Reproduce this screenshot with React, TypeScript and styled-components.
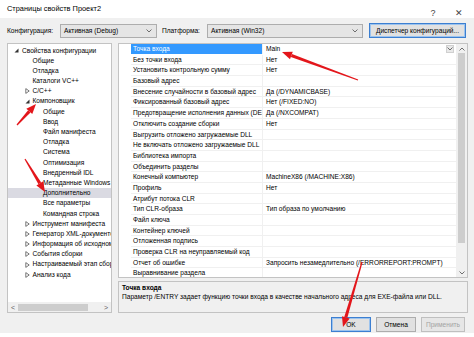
import React from 'react';
import styled, { createGlobalStyle } from 'styled-components';

const GlobalStyle = createGlobalStyle`
  html, body {
    margin: 0;
    padding: 0;
    background: #ffffff;
  }
  body {
    font-family: "Liberation Sans", Arial, sans-serif;
    font-size: 6.6px;
    color: #000;
  }
`;

type TreeItem = { level: number; text: string; exp?: 'open' | 'closed'; selected?: boolean };

const treeItems: TreeItem[] = [
  { level: 0, text: 'Свойства конфигурации', exp: 'open' },
  { level: 1, text: 'Общие' },
  { level: 1, text: 'Отладка' },
  { level: 1, text: 'Каталоги VC++' },
  { level: 1, text: 'C/C++', exp: 'closed' },
  { level: 1, text: 'Компоновщик', exp: 'open' },
  { level: 2, text: 'Общие' },
  { level: 2, text: 'Ввод' },
  { level: 2, text: 'Файл манифеста' },
  { level: 2, text: 'Отладка' },
  { level: 2, text: 'Система' },
  { level: 2, text: 'Оптимизация' },
  { level: 2, text: 'Внедренный IDL' },
  { level: 2, text: 'Метаданные Windows' },
  { level: 2, text: 'Дополнительно', selected: true },
  { level: 2, text: 'Все параметры' },
  { level: 2, text: 'Командная строка' },
  { level: 1, text: 'Инструмент манифеста', exp: 'closed' },
  { level: 1, text: 'Генератор XML-документов', exp: 'closed' },
  { level: 1, text: 'Информация об исходном коде', exp: 'closed' },
  { level: 1, text: 'События сборки', exp: 'closed' },
  { level: 1, text: 'Настраиваемый этап сборки', exp: 'closed' },
  { level: 1, text: 'Анализ кода', exp: 'closed' },
];

const props: [string, string][] = [
  ['Точка входа', 'Main'],
  ['Без точки входа', 'Нет'],
  ['Установить контрольную сумму', 'Нет'],
  ['Базовый адрес', ''],
  ['Внесение случайности в базовый адрес', 'Да (/DYNAMICBASE)'],
  ['Фиксированный базовый адрес', 'Нет (/FIXED:NO)'],
  ['Предотвращение исполнения данных (DEP)', 'Да (/NXCOMPAT)'],
  ['Отключить создание сборки', 'Нет'],
  ['Выгрузить отложено загружаемые DLL', ''],
  ['Не включать отложено загружаемые DLL', ''],
  ['Библиотека импорта', ''],
  ['Объединить разделы', ''],
  ['Конечный компьютер', 'MachineX86 (/MACHINE:X86)'],
  ['Профиль', 'Нет'],
  ['Атрибут потока CLR', ''],
  ['Тип CLR-образа', 'Тип образа по умолчанию'],
  ['Файл ключа', ''],
  ['Контейнер ключей', ''],
  ['Отложенная подпись', ''],
  ['Проверка CLR на неуправляемый код', ''],
  ['Отчет об ошибке', 'Запросить незамедлительно (/ERRORREPORT:PROMPT)'],
  ['Выравнивание раздела', ''],
];

const Stage = styled.div`
  position: relative;
  width: 474px;
  height: 337px;
  overflow: hidden;
`;

const Window = styled.div`
  width: 474px;
  height: 333px;
  background: #f0f0f0;
  display: flex;
  flex-direction: column;
`;

const TitleBar = styled.div`
  height: 18px;
  background: #ffffff;
  display: flex;
  align-items: center;
  padding: 0 2px 0 7px;
  font-size: 7.4px;
`;

const Title = styled.div`
  flex: 1;
  margin-top: -2px;
`;

const TitleBtn = styled.div`
  width: 26px;
  text-align: center;
  font-size: 9px;
  color: #444;
  margin-top: 7px;
`;

const ConfigRow = styled.div`
  height: 25px;
  display: flex;
  align-items: center;
  padding: 0 7px;
  gap: 5px;
`;

const Label = styled.span<{ $w: number }>`
  width: ${(p) => p.$w}px;
  white-space: nowrap;
`;

const Combo = styled.div<{ $w: number }>`
  width: ${(p) => p.$w}px;
  height: 14px;
  box-sizing: border-box;
  border: 1px solid #adadad;
  background: #e5e5e5;
  display: flex;
  align-items: center;
  padding: 0 4px 0 3px;
  justify-content: space-between;
`;

const Button = styled.div<{ $w: number; $primary?: boolean; $disabled?: boolean }>`
  width: ${(p) => p.$w}px;
  height: 15px;
  box-sizing: border-box;
  border: 1px solid ${(p) => (p.$primary ? '#3c7fd1' : p.$disabled ? '#bfbfbf' : '#adadad')};
  box-shadow: ${(p) => (p.$primary ? 'inset 0 0 0 1px #9cc3ee' : 'none')};
  background: ${(p) => (p.$disabled ? '#e6e6e6' : '#e1e1e1')};
  color: ${(p) => (p.$disabled ? '#a3a3a3' : '#000')};
  display: flex;
  align-items: center;
  justify-content: center;
  white-space: nowrap;
`;

const Main = styled.div`
  height: 270px;
  display: flex;
  padding: 0 6px 0 7px;
  gap: 6px;
`;

const Tree = styled.div`
  width: 105px;
  box-sizing: border-box;
  border: 1px solid #c3c3c3;
  background: #fff;
  display: flex;
  flex-direction: column;
`;

const TreeList = styled.div`
  flex: 1;
  overflow: hidden;
  padding-top: 1.5px;
`;

const TreeRow = styled.div<{ $level: number; $selected?: boolean }>`
  height: 10.2px;
  line-height: 10.2px;
  display: flex;
  align-items: center;
  white-space: nowrap;
  padding-left: ${(p) => 14 + p.$level * 10.5 - 8}px;
  background: ${(p) => (p.$selected ? '#dadae2' : 'transparent')};
`;

const Expander = styled.span`
  width: 8px;
  flex: none;
  display: flex;
  align-items: center;
`;

const HScroll = styled.div`
  height: 10px;
  background: #f0f0f0;
  display: flex;
  align-items: center;
  padding: 0 3px;
  gap: 3px;
  font-size: 7px;
  color: #606060;
`;

const HThumb = styled.div`
  width: 70px;
  height: 7px;
  background: #cdcdcd;
`;

const Right = styled.div`
  flex: 1;
  display: flex;
  flex-direction: column;
  gap: 3px;
`;

const Grid = styled.div`
  height: 235px;
  box-sizing: border-box;
  border: 1px solid #c3c3c3;
  background: #fff;
  display: flex;
`;

const GridBody = styled.div`
  flex: 1;
  overflow: hidden;
  padding-left: 12px;
`;

const PropRow = styled.div<{ $selected?: boolean }>`
  height: 10.7px;
  box-sizing: border-box;
  display: grid;
  grid-template-columns: 132px 1fr;
  border-bottom: 1px solid ${(p) => (p.$selected ? '#ffffff' : '#f0f0f0')};
  white-space: nowrap;
`;

const PropName = styled.div<{ $selected?: boolean }>`
  overflow: hidden;
  text-overflow: clip;
  padding-left: 2px;
  line-height: 9.7px;
  border-right: 1px solid #f0f0f0;
  background: ${(p) => (p.$selected ? '#3399ff' : 'transparent')};
  color: ${(p) => (p.$selected ? '#fff' : '#000')};
`;

const PropValue = styled.div`
  position: relative;
  overflow: hidden;
  padding-left: 3px;
  line-height: 9.7px;
`;

const DropBtn = styled.div`
  position: absolute;
  right: 2px;
  top: 1px;
  width: 8px;
  height: 8px;
  background: #e8e8e8;
  border: 1px solid #d0d0d0;
  box-sizing: border-box;
  display: flex;
  align-items: center;
  justify-content: center;
`;

const VScroll = styled.div`
  width: 11px;
  background: #f0f0f0;
  display: flex;
  flex-direction: column;
  align-items: center;
`;

const VArrow = styled.div`
  height: 9px;
  display: flex;
  align-items: center;
  justify-content: center;
`;

const VThumb = styled.div`
  width: 7px;
  height: 190px;
  background: #cdcdcd;
  margin-bottom: auto;
`;

const Desc = styled.div`
  flex: 1;
  box-sizing: border-box;
  border: 1px solid #c3c3c3;
  background: #f0f0f0;
  padding: 2px 3px;
  display: flex;
  flex-direction: column;
  gap: 2px;
`;

const DescTitle = styled.div`
  font-weight: bold;
`;

const Footer = styled.div`
  flex: 1;
  display: flex;
  justify-content: flex-end;
  align-items: flex-start;
  padding: 4px 9px 0 0;
  gap: 5px;
`;

const Overlay = styled.svg`
  position: absolute;
  left: 0;
  top: 0;
  pointer-events: none;
`;

const Chevron = ({ up = false }: { up?: boolean }) => (
  <svg width="6" height="4" viewBox="0 0 6 4">
    <path d={up ? 'M0.5 3.5 L3 1 L5.5 3.5' : 'M0.5 0.5 L3 3 L5.5 0.5'} fill="none" stroke="#606060" strokeWidth="0.9" />
  </svg>
);

const Tri = ({ open }: { open: boolean }) =>
  open ? (
    <svg width="5" height="5" viewBox="0 0 5 5">
      <path d="M4.5 0.5 L4.5 4.5 L0.5 4.5 Z" fill="#333" />
    </svg>
  ) : (
    <svg width="5" height="6" viewBox="0 0 5 6">
      <path d="M0.8 0.6 L4.2 3 L0.8 5.4 Z" fill="none" stroke="#555" strokeWidth="0.8" />
    </svg>
  );

const arrows = [
  { x1: 358, y1: 80, x2: 282, y2: 52 },
  { x1: 17, y1: 125, x2: 36, y2: 104 },
  { x1: 25, y1: 159, x2: 45, y2: 192 },
  { x1: 362, y1: 262, x2: 343, y2: 327 },
];

const Arrow = ({ x1, y1, x2, y2 }: { x1: number; y1: number; x2: number; y2: number }) => {
  const dx = x2 - x1;
  const dy = y2 - y1;
  const len = Math.hypot(dx, dy);
  const ux = dx / len;
  const uy = dy / len;
  const nx = -uy;
  const ny = ux;
  const h = 10;
  const bx = x2 - ux * h;
  const by = y2 - uy * h;
  const body = [
    [x1 + nx * 0.6, y1 + ny * 0.6],
    [bx + nx * 1.6, by + ny * 1.6],
    [bx - nx * 1.6, by - ny * 1.6],
    [x1 - nx * 0.6, y1 - ny * 0.6],
  ];
  const head = [
    [x2, y2],
    [bx + nx * 4, by + ny * 4],
    [bx - nx * 4, by - ny * 4],
  ];
  const pts = (a: number[][]) => a.map((p) => p.join(',')).join(' ');
  return (
    <g fill="#e3161b">
      <polygon points={pts(body)} />
      <polygon points={pts(head)} />
    </g>
  );
};

export default function App() {
  return (
    <Stage>
      <GlobalStyle />
      <Window>
        <TitleBar>
          <Title>Страницы свойств Проект2</Title>
          <TitleBtn>?</TitleBtn>
          <TitleBtn>✕</TitleBtn>
        </TitleBar>
        <ConfigRow>
          <Label $w={48}>Конфигурация:</Label>
          <Combo $w={97}>
            <span>Активная (Debug)</span>
            <Chevron />
          </Combo>
          <Label $w={40}>Платформа:</Label>
          <Combo $w={156}>
            <span>Активная (Win32)</span>
            <Chevron />
          </Combo>
          <Button $w={97} $primary style={{ marginLeft: 1 }}>
            Диспетчер конфигураций...
          </Button>
        </ConfigRow>
        <Main>
          <Tree>
            <TreeList>
              {treeItems.map((it, i) => (
                <TreeRow key={i} $level={it.level} $selected={it.selected}>
                  <Expander>{it.exp && <Tri open={it.exp === 'open'} />}</Expander>
                  {it.text}
                </TreeRow>
              ))}
            </TreeList>
            <HScroll>
              <span>&lt;</span>
              <HThumb />
              <span style={{ marginLeft: 'auto' }}>&gt;</span>
            </HScroll>
          </Tree>
          <Right>
            <Grid>
              <GridBody>
                {props.map(([name, value], i) => (
                  <PropRow key={i} $selected={i === 0}>
                    <PropName $selected={i === 0}>{name}</PropName>
                    <PropValue>
                      {value}
                      {i === 0 && (
                        <DropBtn>
                          <Chevron />
                        </DropBtn>
                      )}
                    </PropValue>
                  </PropRow>
                ))}
              </GridBody>
              <VScroll>
                <VArrow>
                  <Chevron up />
                </VArrow>
                <VThumb />
                <VArrow>
                  <Chevron />
                </VArrow>
              </VScroll>
            </Grid>
            <Desc>
              <DescTitle>Точка входа</DescTitle>
              <div>Параметр /ENTRY задает функцию точки входа в качестве начального адреса для EXE-файла или DLL.</div>
            </Desc>
          </Right>
        </Main>
        <Footer>
          <Button $w={40} $primary>OK</Button>
          <Button $w={40}>Отмена</Button>
          <Button $w={44} $disabled>Применить</Button>
        </Footer>
      </Window>
      <Overlay width="474" height="337" viewBox="0 0 474 337">
        {arrows.map((a, i) => (
          <Arrow key={i} {...a} />
        ))}
      </Overlay>
    </Stage>
  );
}
